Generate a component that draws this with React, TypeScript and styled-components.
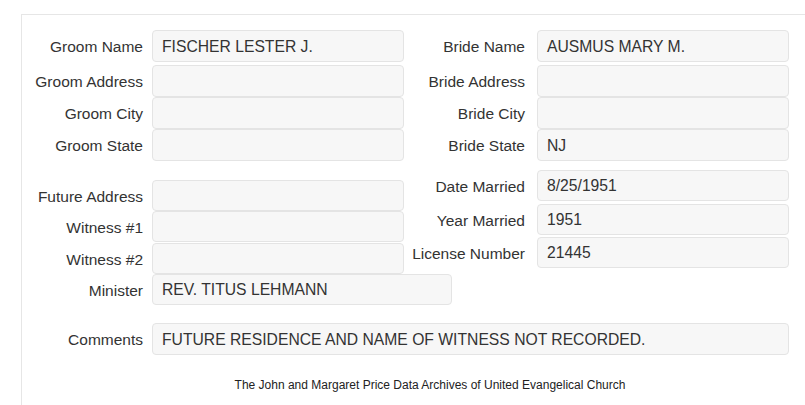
import styled, { createGlobalStyle } from 'styled-components';

const GlobalStyle = createGlobalStyle`
  html, body {
    margin: 0;
    padding: 0;
    background: #fff;
  }
  body {
    font-family: 'Liberation Sans', Arial, sans-serif;
    color: #333;
    overflow: hidden;
  }
`;

const Panel = styled.div`
  margin: 14px 0 0 21px;
  height: 391px;
  border-top: 1px solid #e6e6e6;
  border-left: 1px solid #e6e6e6;
  padding-top: 15px;
  box-sizing: border-box;
`;

const Columns = styled.div`
  display: grid;
  grid-template-columns: 382px 385px;
  align-items: start;
`;

const Column = styled.div`
  display: flex;
  flex-direction: column;
`;

const Row = styled.div<{ $gap?: number; $width?: number; $height?: number; $mt?: number }>`
  display: grid;
  grid-template-columns: 121px ${(p) => p.$width ?? 252}px;
  column-gap: ${(p) => p.$gap ?? 9}px;
  height: ${(p) => p.$height ?? 32}px;
  margin-top: ${(p) => p.$mt ?? 0}px;
  align-items: center;
`;

const Label = styled.div`
  font-size: 15.5px;
  padding-top: 2px;
  text-align: right;
  white-space: nowrap;
  color: #333;
`;

const Field = styled.div`
  height: 100%;
  box-sizing: border-box;
  background: #f7f7f7;
  border: 1px solid #e4e4e4;
  border-radius: 4px;
  padding: 1px 9px 0;
  display: flex;
  align-items: center;
  font-size: 15.7px;
  color: #333;
  white-space: nowrap;
`;

const Footer = styled.div`
  margin-top: 23px;
  padding-left: 33px;
  text-align: center;
  font-size: 12px;
  color: #222;
`;

type Item = { label: string; value?: string; mt?: number; height?: number; width?: number };

const groom: Item[] = [
  { label: 'Groom Name', value: 'FISCHER LESTER J.' },
  { label: 'Groom Address', mt: 3 },
  { label: 'Groom City' },
  { label: 'Groom State' },
  { label: 'Future Address', mt: 19, height: 31 },
  { label: 'Witness #1', height: 31 },
  { label: 'Witness #2', mt: 1, height: 31 },
  { label: 'Minister', value: 'REV. TITUS LEHMANN', height: 31, width: 300 },
];

const bride: Item[] = [
  { label: 'Bride Name', value: 'AUSMUS MARY M.' },
  { label: 'Bride Address', mt: 3 },
  { label: 'Bride City' },
  { label: 'Bride State', value: 'NJ' },
  { label: 'Date Married', value: '8/25/1951', mt: 9, height: 31 },
  { label: 'Year Married', value: '1951', mt: 3, height: 31 },
  { label: 'License Number', value: '21445', mt: 2, height: 31 },
];

function App() {
  return (
    <>
      <GlobalStyle />
      <Panel>
        <Columns>
          <Column>
            {groom.map((f) => (
              <Row key={f.label} $mt={f.mt} $height={f.height} $width={f.width}>
                <Label>{f.label}</Label>
                <Field>{f.value}</Field>
              </Row>
            ))}
          </Column>
          <Column>
            {bride.map((f) => (
              <Row key={f.label} $gap={12} $mt={f.mt} $height={f.height}>
                <Label>{f.label}</Label>
                <Field>{f.value}</Field>
              </Row>
            ))}
          </Column>
        </Columns>
        <Row $mt={18} $width={637} $height={32}>
          <Label>Comments</Label>
          <Field>FUTURE RESIDENCE AND NAME OF WITNESS NOT RECORDED.</Field>
        </Row>
        <Footer>The John and Margaret Price Data Archives of United Evangelical Church</Footer>
      </Panel>
    </>
  );
}

export default App;
